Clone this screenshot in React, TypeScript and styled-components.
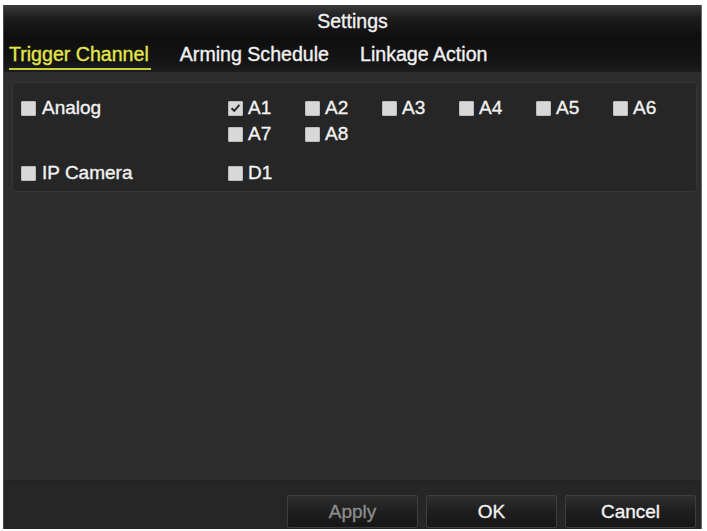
import React from "react";
import styled, { createGlobalStyle } from "styled-components";

const Global = createGlobalStyle`
  html, body { margin: 0; padding: 0; background: #ffffff; }
  body { font-family: "Liberation Sans", Arial, sans-serif; }
`;

const Frame = styled.div`
  margin: 5px 0 0 3px;
  width: 699px;
  height: 524px;
  box-sizing: border-box;
  border-left: 1px solid #4a4a4a;
  border-right: 1px solid #6a6a6a;
  background: #2d2d2d;
  display: flex;
  flex-direction: column;
  color: #f2f2f2;
  font-family: "Liberation Sans", Arial, sans-serif;
`;

const TitleBar = styled.div`
  height: 31px;
  display: flex;
  align-items: center;
  justify-content: center;
  background: linear-gradient(#3a3a3a 0%, #1c1c1c 45%, #0e0e0e 100%);
  font-size: 19.5px;
  padding-top: 1px;
  box-sizing: border-box;
  -webkit-text-stroke: 0.35px currentColor;
`;

const TabBar = styled.div`
  height: 36px;
  display: flex;
  align-items: flex-start;
  gap: 29px;
  padding: 7px 0 0 5px;
  box-sizing: border-box;
  background: linear-gradient(#0e0e0e 0%, #141414 70%, #1d1d1d 100%);
`;

const Tab = styled.div<{ $active?: boolean }>`
  font-size: 19.6px;
  line-height: 22px;
  padding: 0 2px 3px 0;
  color: ${(p) => (p.$active ? "#e4e64a" : "#f2f2f2")};
  border-bottom: 2px solid ${(p) => (p.$active ? "#c9cc3a" : "transparent")};
  -webkit-text-stroke: 0.35px currentColor;
`;

const Body = styled.div`
  flex: 1;
  padding: 10px 4px 0 8px;
  background: #2d2d2d;
`;

const Panel = styled.div`
  height: 110px;
  box-sizing: border-box;
  border: 1px solid #363636;
  border-radius: 4px;
  background: #262626;
  padding: 14px 8px 8px 8px;
  display: flex;
  flex-direction: column;
  gap: 17px;
`;

const Group = styled.div`
  display: grid;
  grid-template-columns: 207px repeat(6, 77px);
  row-gap: 4px;
`;

const Item = styled.div`
  display: flex;
  align-items: center;
  gap: 5px;
  height: 22px;
  font-size: 19px;
  color: #f2f2f2;
  -webkit-text-stroke: 0.35px currentColor;
`;

const LabelCell = styled(Item)`
  grid-row: span 2;
  align-self: start;
  gap: 6px;
`;

const Box = styled.span`
  width: 15px;
  height: 15px;
  box-sizing: border-box;
  background: #d8d8d8;
  border: 1px solid #bcbcbc;
  border-radius: 1px;
  display: inline-flex;
  align-items: center;
  justify-content: center;
  flex: none;
  -webkit-text-stroke: 0;
`;

const Footer = styled.div`
  height: 49px;
  box-sizing: border-box;
  background: #262626;
  border-top: 1px solid #222;
  display: flex;
  justify-content: flex-end;
  align-items: flex-end;
  gap: 8px;
  padding: 0 5px 1px 0;
`;

const Button = styled.div<{ $disabled?: boolean }>`
  width: 131px;
  height: 33px;
  box-sizing: border-box;
  border: 1px solid #3e3e3e;
  border-radius: 2px;
  background: linear-gradient(#2f2f2f 0%, #1e1e1e 50%, #161616 100%);
  display: flex;
  align-items: center;
  justify-content: center;
  font-size: 19px;
  padding-top: 1px;
  color: ${(p) => (p.$disabled ? "#8c8c8c" : "#f2f2f2")};
  -webkit-text-stroke: 0.35px currentColor;
`;

const Check = ({ checked }: { checked?: boolean }) => (
  <Box>
    {checked && (
      <svg width="11" height="10" viewBox="0 0 11 10">
        <path d="M1.5 5.2 L4.3 7.8 L9.4 1.8" fill="none" stroke="#2a2a2a" strokeWidth="2" />
      </svg>
    )}
  </Box>
);

const groups = [
  { label: "Analog", channels: ["A1", "A2", "A3", "A4", "A5", "A6", "A7", "A8"], checked: ["A1"] },
  { label: "IP Camera", channels: ["D1"], checked: [] as string[] },
];

export default function App() {
  return (
    <>
      <Global />
      <Frame>
        <TitleBar>Settings</TitleBar>
        <TabBar>
          <Tab $active>Trigger Channel</Tab>
          <Tab>Arming Schedule</Tab>
          <Tab>Linkage Action</Tab>
        </TabBar>
        <Body>
          <Panel>
            {groups.map((g) => (
              <Group key={g.label}>
                <LabelCell>
                  <Check />
                  {g.label}
                </LabelCell>
                {g.channels.map((c) => (
                  <Item key={c}>
                    <Check checked={g.checked.includes(c)} />
                    {c}
                  </Item>
                ))}
              </Group>
            ))}
          </Panel>
        </Body>
        <Footer>
          <Button $disabled>Apply</Button>
          <Button>OK</Button>
          <Button>Cancel</Button>
        </Footer>
      </Frame>
    </>
  );
}
